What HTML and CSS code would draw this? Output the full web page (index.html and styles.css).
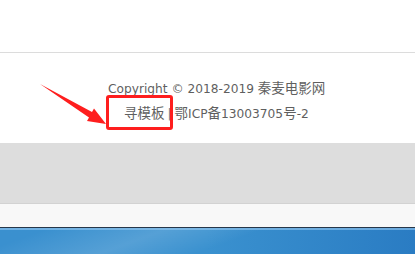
FILE: index.html
```html
<!DOCTYPE html>
<html lang="zh-CN">
<head>
    <meta charset="UTF-8">
    <title>秦麦电影网</title>
    <link rel="stylesheet" href="styles.css">
</head>
<body>
    <div class="page">
        <div class="header"></div>
        <div class="footer">
            <p class="copy">Copyright © 2018-2019 <span class="cn">秦麦电影网</span></p>
            <p class="icp"><span class="cn">寻模板</span><span class="sep">|</span><span class="cn">鄂</span>ICP<span class="cn">备</span>13003705<span class="cn">号</span>-2</p>
        </div>
        <div class="band"></div>
        <div class="status"></div>
        <div class="taskbar"></div>

        <!-- 标注 -->
        <div class="mark-box"></div>
        <svg class="mark-arrow" width="415" height="255" viewBox="0 0 415 255">
            <polygon points="40,84 92,112 94,108.5 106,124 87,121 89,117.5" fill="#fe1e1e"/>
        </svg>
    </div>
</body>
</html>
```

FILE: styles.css
```css
body {
    margin: 0;
    padding: 0;
    background-color: #fff;
    font-family: "DejaVu Sans", "Noto Sans CJK SC", sans-serif;
}
.page {
    position: relative;
    width: 415px;
    height: 255px;
    overflow: hidden;
}
.header {
    height: 52px;
    border-bottom: 1px solid #dcdcdc;
}
.footer {
    height: 90px;
    padding-left: 108px;
    color: #5f5f5f;
    font-size: 12.2px;
}
.footer p {
    margin: 0;
    line-height: 23px;
    white-space: nowrap;
}
.cn {
    font-family: "Noto Sans CJK SC", sans-serif;
    font-size: 13.5px;
}
.copy {
    padding-top: 23px;
}
.icp {
    padding-left: 16px;
}
.sep {
    margin: 0 3px;
    color: #777;
}
.band {
    height: 60px;
    background-color: #dddddd;
}
.status {
    height: 23px;
    border-top: 1px solid #d2d2d2;
    background-color: #f8f8f8;
}
.taskbar {
    height: 26px;
    border-top: 1px solid #26374a;
    background-image:
        linear-gradient(160deg, rgba(255,255,255,0) 10%, rgba(255,255,255,0.14) 35%, rgba(255,255,255,0) 55%),
        linear-gradient(to right, #3a90cf 0, #3a91cf 50%, #2a7cc3 100%);
    box-shadow: inset 0 2px 0 rgba(150, 200, 240, 0.6);
}
.mark-box {
    position: absolute;
    left: 106px;
    top: 95px;
    width: 61px;
    height: 29px;
    border: 3px solid #fe1e1e;
    border-radius: 3px;
}
.mark-arrow {
    position: absolute;
    left: 0;
    top: 0;
}
```
